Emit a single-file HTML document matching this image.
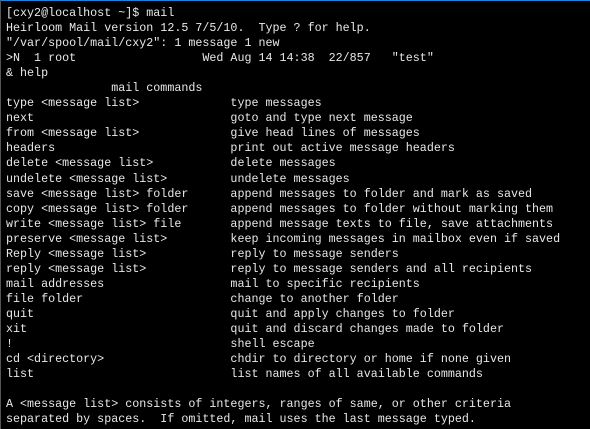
<!DOCTYPE html>
<html><head><meta charset="utf-8"><style>
html,body{margin:0;padding:0;background:#000;width:590px;height:429px;overflow:hidden;position:relative}
.top{position:absolute;left:0;top:0;width:590px;height:1px;background:#1a82e0}
.left{position:absolute;left:0;top:0;width:1px;height:429px;background:#555}
pre{position:absolute;left:6px;top:6px;margin:0;font-family:"Liberation Mono","DejaVu Sans Mono",monospace;font-size:11.7px;line-height:15.05px;color:#e8e8e8;white-space:pre}
</style></head><body><div class="top"></div><div class="left"></div>
<pre>[cxy2@localhost ~]$ mail
Heirloom Mail version 12.5 7/5/10.  Type ? for help.
"/var/spool/mail/cxy2": 1 message 1 new
&gt;N  1 root                  Wed Aug 14 14:38  22/857   "test"
&amp; help
               mail commands
type &lt;message list&gt;             type messages
next                            goto and type next message
from &lt;message list&gt;             give head lines of messages
headers                         print out active message headers
delete &lt;message list&gt;           delete messages
undelete &lt;message list&gt;         undelete messages
save &lt;message list&gt; folder      append messages to folder and mark as saved
copy &lt;message list&gt; folder      append messages to folder without marking them
write &lt;message list&gt; file       append message texts to file, save attachments
preserve &lt;message list&gt;         keep incoming messages in mailbox even if saved
Reply &lt;message list&gt;            reply to message senders
reply &lt;message list&gt;            reply to message senders and all recipients
mail addresses                  mail to specific recipients
file folder                     change to another folder
quit                            quit and apply changes to folder
xit                             quit and discard changes made to folder
!                               shell escape
cd &lt;directory&gt;                  chdir to directory or home if none given
list                            list names of all available commands

A &lt;message list&gt; consists of integers, ranges of same, or other criteria
separated by spaces.  If omitted, mail uses the last message typed.
&amp; </pre>
</body></html>
